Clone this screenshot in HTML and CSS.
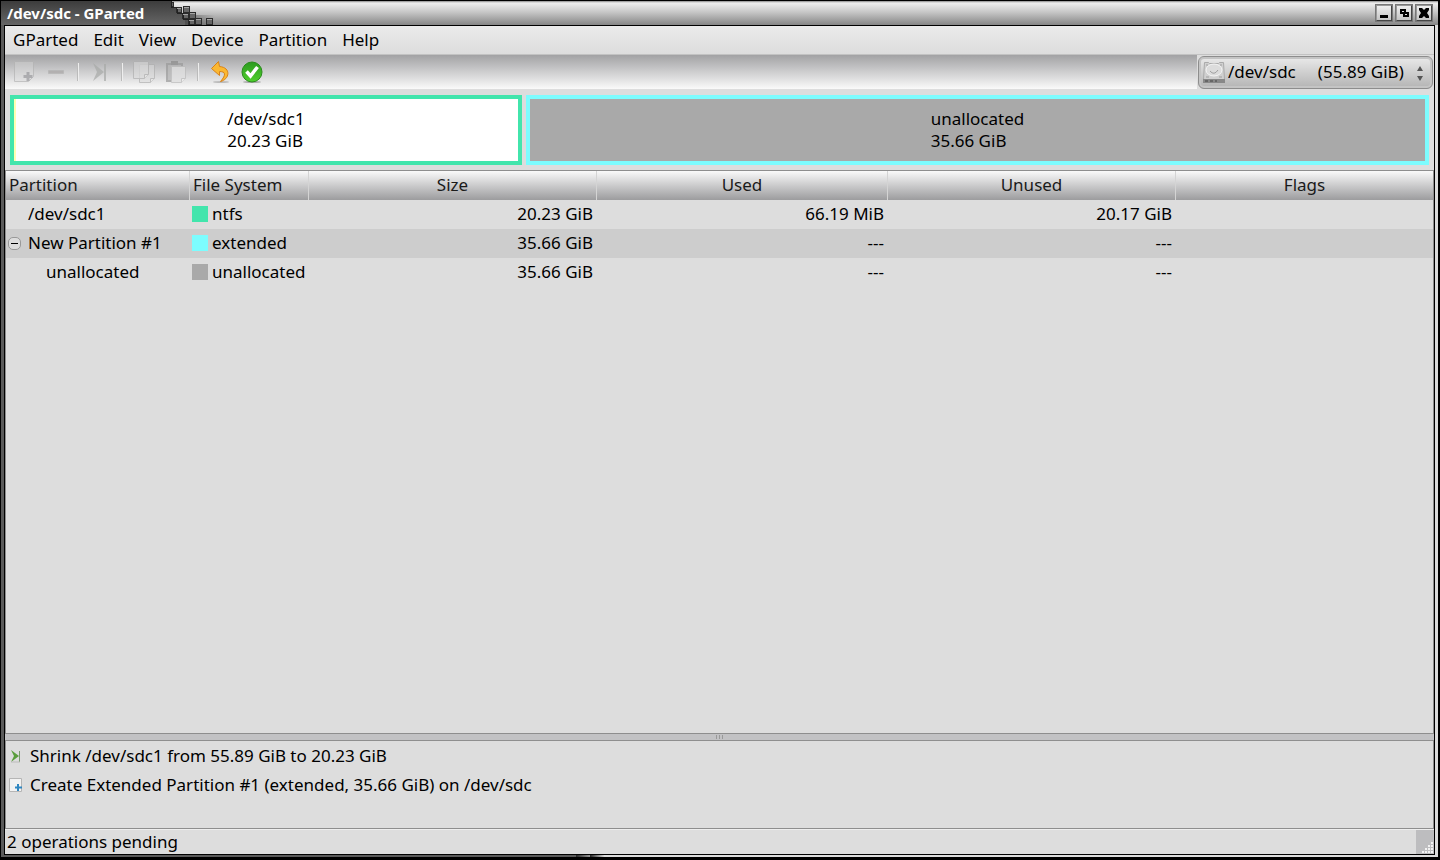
FILE: index.html
```
<!DOCTYPE html>
<html lang="en">
<head>
<meta charset="utf-8">
<title>/dev/sdc - GParted</title>
<link rel="stylesheet" href="styles.css">
</head>
<body>
<div class="window">
  <header class="titlebar">
    <h1 class="title">/dev/sdc - GParted</h1>
    <svg class="title-blocks" width="60" height="24" viewBox="0 0 60 24" shape-rendering="crispEdges" aria-hidden="true">
      <defs>
        <linearGradient id="dark" x1="0" y1="0" x2="0" y2="1"><stop offset="0" stop-color="#3c3c3c"/><stop offset="1" stop-color="#666"/></linearGradient>
        <linearGradient id="shade" x1="0" y1="0" x2="1" y2="0"><stop offset="0" stop-color="#444" stop-opacity=".6"/><stop offset="1" stop-color="#444" stop-opacity="0"/></linearGradient>
      </defs>
      <path d="M0 0h16v6h6v6h6v6h6v6H0z" fill="url(#dark)"/>
      <path d="M30 14h30v10H30z" fill="url(#shade)"/>
      <g fill="#666" stroke="#2c2c2c">
        <path d="M16.500 1.500h2v4h-2zM21.500 6.500h5v5h-5zM28.500 5.500h6v6h-6zM27.500 12.500h6v5h-6zM34.500 11.500h6v6h-6zM33.500 18.500h6v5h-6zM40.500 17.500h6v6h-6zM51.500 17.500h6v6h-6z"/>
      </g>
      <path d="M16 0v6h6v6h6v6h6v6" fill="none" stroke="#222"/>
      <path d="M22 7h4M29 6h5M28 13h5M35 12h5M34 19h5M41 18h5M52 18h5" transform="translate(0 .5)" stroke="#a4a4a4"/>
    </svg>
    <div class="window-buttons">
      <button class="wbtn" type="button" aria-label="Minimize"><svg width="12" height="12" viewBox="0 0 12 12"><path d="M2 8h8v3H2z"/></svg></button>
      <button class="wbtn" type="button" aria-label="Maximize"><svg width="12" height="12" viewBox="0 0 12 12"><path d="M2 2h6v5H2zM5 5h6v5H5z"/><path d="M4 4h2v1H4zM7 7h2v1H7z" fill="#ddd"/></svg></button>
      <button class="wbtn" type="button" aria-label="Close"><svg width="12" height="12" viewBox="0 0 12 12"><path d="M1 1h3l2 2 2-2h3v2L9 6l2 3v2H8L6 9l-2 2H1V9l2-3-2-3z"/></svg></button>
    </div>
  </header>

  <main class="content">
    <nav class="menubar" aria-label="Main menu">
      <button type="button">GParted</button>
      <button type="button">Edit</button>
      <button type="button">View</button>
      <button type="button">Device</button>
      <button type="button">Partition</button>
      <button type="button">Help</button>
    </nav>

    <div class="toolbar">
      <div class="tools">
        <button type="button" class="tool" aria-label="New" disabled><svg width="24" height="24" viewBox="0 0 24 24"><path d="M2.500 1.500h19v15l-5 5h-14z" fill="#ddd" fill-opacity=".5" stroke="#b4b4b4"/><path d="M16 12v9M11.500 16.500h9" stroke="#9a9a9e" stroke-width="3"/></svg></button>
        <button type="button" class="tool" aria-label="Delete" disabled><svg width="24" height="24" viewBox="0 0 24 24"><path d="M4.500 10.500h15v3h-15z" fill="#a8a4a4" stroke="#b0b0b0"/></svg></button>
        <span class="sep"></span>
        <button type="button" class="tool" aria-label="Resize/Move" disabled><svg width="24" height="24" viewBox="0 0 24 24"><path d="M5 3l11 9-11 9 4-9zM16 4h2v17h-2z" fill="#a8aaa8"/></svg></button>
        <span class="sep"></span>
        <button type="button" class="tool" aria-label="Copy" disabled><svg width="24" height="24" viewBox="0 0 24 24"><g fill="#ddd" fill-opacity=".7" stroke="#b0b0b0"><path d="M7.500 4.500h15v14l-4 4h-11z"/><path d="M1.500 1.500h15v13l-4 4h-11z"/><path d="M12.500 18.500v-4h4M18.500 22.500v-4h4" fill="#eee"/></g></svg></button>
        <button type="button" class="tool" aria-label="Paste" disabled><svg width="24" height="24" viewBox="0 0 24 24"><path d="M2 3h17v19H2z" fill="#999"/><path d="M4 5h13v15H4z" fill="#b4b4b4"/><path d="M7 1h7v4H7z" fill="#8c8c8c"/><path d="M7.500 6.500h14v12l-4 4h-10z" fill="#e0e0e0" stroke="#bbb"/><path d="M17.500 22.500v-4h4" fill="#eee" stroke="#bbb"/></svg></button>
        <span class="sep"></span>
        <button type="button" class="tool" aria-label="Undo"><svg width="24" height="24" viewBox="0 0 24 24"><ellipse cx="13" cy="22" rx="8" ry="1" fill="#bbb"/><path d="M10.500 1.500l-7 7 8 7v-4c6 0 7 3 1 10 9-2 11-14-1-15z" fill="#fbb832" stroke="#d98318"/></svg></button>
        <button type="button" class="tool" aria-label="Apply"><svg width="24" height="24" viewBox="0 0 24 24"><defs><linearGradient id="ok" x2="0" y2="1"><stop stop-color="#2c9a20"/><stop offset="1" stop-color="#4fd02c"/></linearGradient></defs><ellipse cx="12" cy="22" rx="9" ry="1" fill="#aaa"/><circle cx="12" cy="12" r="10" fill="url(#ok)" stroke="#2a8c1c"/><path d="M6.500 11.500l4 4.500 7-9" fill="none" stroke="#fff" stroke-width="3.500"/></svg></button>
      </div>
      <div class="device">
        <svg class="disk" width="24" height="24" viewBox="0 0 24 24" aria-hidden="true"><path d="M2.500 1.500h4l1 1h9l1-1h4l1 17h-21z" fill="#d0d0d0" stroke="#aaa"/><ellipse cx="12" cy="9" rx="8" ry="6" fill="#dcdcdc" stroke="#f4f4f4"/><path d="M8 10q4 5 8-1M4 4h2M18 4h2M4 16h3M17 16h3" fill="none" stroke="#a0a0a0"/><path d="M1 18h22v4H1z" fill="#888"/><path d="M3 20h3M8 20h3M13 20h2" stroke="#444"/></svg>
        <select aria-label="Device"><option>/dev/sdc&nbsp;&nbsp;&nbsp;&nbsp;&nbsp;(55.89 GiB)</option></select>
        <svg class="arrows" width="8" height="18" viewBox="0 0 8 18" aria-hidden="true"><path d="M1 7l3-5 3 5zM1 12l3 5 3-5z" fill="#555"/></svg>
      </div>
    </div>

    <section class="disk-map" aria-label="Disk layout">
      <div class="part part-ntfs"><p>/dev/sdc1<br>20.23 GiB</p></div>
      <div class="part part-free"><p>unallocated<br>35.66 GiB</p></div>
    </section>

    <section class="partitions">
      <table>
        <colgroup><col class="c-part"><col class="c-fs"><col class="c-size"><col class="c-used"><col class="c-size"><col></colgroup>
        <thead><tr><th>Partition</th><th>File System</th><th>Size</th><th>Used</th><th>Unused</th><th>Flags</th></tr></thead>
        <tbody>
          <tr><td class="name">/dev/sdc1</td><td class="fs"><i class="swatch ntfs"></i>ntfs</td><td>20.23 GiB</td><td>66.19 MiB</td><td>20.17 GiB</td><td></td></tr>
          <tr><td class="name parent"><button type="button" class="expander" aria-label="Collapse"></button>New Partition #1</td><td class="fs"><i class="swatch extended"></i>extended</td><td>35.66 GiB</td><td>---</td><td>---</td><td></td></tr>
          <tr><td class="name child">unallocated</td><td class="fs"><i class="swatch free"></i>unallocated</td><td>35.66 GiB</td><td>---</td><td>---</td><td></td></tr>
        </tbody>
      </table>
    </section>

    <div class="splitter"><i></i><i></i><i></i></div>

    <ul class="operations">
      <li><svg width="14" height="14" viewBox="0 0 14 14" aria-hidden="true"><path d="M2 1l8 6-8 6 3-6z" fill="#5a9e3c"/><path d="M10 2h1v11h-1z" fill="#769a6a"/><path d="M2 13h9" stroke="#bbb"/></svg>Shrink /dev/sdc1 from 55.89 GiB to 20.23 GiB</li>
      <li><svg width="14" height="14" viewBox="0 0 14 14" aria-hidden="true"><path d="M.5.500h12v13H.5z" fill="#f2f2f2" stroke="#b5b5b5"/><path d="M9 6v7M6 9.500h7" stroke="#2f86c0" stroke-width="2"/></svg>Create Extended Partition #1 (extended, 35.66 GiB) on /dev/sdc</li>
    </ul>

    <footer class="statusbar">
      <p>2 operations pending</p>
      <div class="grip"><svg width="12" height="12" viewBox="0 0 12 12" shape-rendering="crispEdges" aria-hidden="true"><path d="M9 0h2v2H9zM6 3h2v2H6zM9 3h2v2H9zM3 6h2v2H3zM6 6h2v2H6zM9 6h2v2H9zM0 9h2v2H0zM3 9h2v2H3zM6 9h2v2H6zM9 9h2v2H9z" fill="#f2f2f2"/></svg></div>
    </footer>
  </main>
</div>
</body>
</html>
```
FILE: styles.css
```
* { box-sizing: border-box; }

body {
  margin: 0;
  background: #000;
  color: #000;
  font: 17px/22px "Noto Sans", sans-serif;
}

button, select { font: inherit; color: inherit; margin: 0; }
p, h1, ul { margin: 0; padding: 0; }
svg { display: block; flex: none; }

/* Window frame */
.window {
  display: flex;
  flex-direction: column;
  height: 100vh;
  padding: 0 3px 2px;
  border: solid #000;
  border-width: 1px 2px 3px 1px;
  background: linear-gradient(to right, #5a5a5a 40%, #222 40%, #999 41%, #222 41%, #dcdcdc 42%);
}

.titlebar {
  display: flex;
  height: 24px;
  margin: 0 -3px;
  background: linear-gradient(#888, #eee 8%, #c8c8c8 45%, #868686);
}

.title {
  padding: 0 11px 0 6px;
  background: linear-gradient(#3c3c3c, #666);
  color: #fff;
  font-size: 15px;
  line-height: 24px;
}

.window-buttons {
  display: flex;
  gap: 2px;
  margin-left: auto;
  padding: 3px 5px 0 0;
}

.wbtn {
  display: grid;
  place-items: center;
  width: 18px;
  height: 18px;
  padding: 0;
  border: 2px outset #999;
  outline: 1px solid #777;
  outline-offset: -1px;
  background: linear-gradient(#eee, #c4c4c4);
}

.content {
  display: flex;
  flex: 1;
  flex-direction: column;
  min-height: 0;
  border: 1px solid #000;
  background: #ddd;
}

/* Menu */
.menubar {
  display: flex;
  gap: 1px;
  height: 29px;
  padding: 0 1px;
  border-bottom: 1px solid #c2c2c2;
  background: linear-gradient(#ebebeb, #ddd);
}

.menubar button {
  padding: 0 7px;
  border: 0;
  background: none;
}

/* Toolbar */
.toolbar { display: flex; height: 34px; }

.tools {
  display: flex;
  flex: 1;
  align-items: center;
  padding-left: 3px;
  background: linear-gradient(#a2a2a4, #fafafa);
}

.tool {
  display: grid;
  place-items: center;
  width: 32px;
  height: 32px;
  padding: 0;
  border: 0;
  background: none;
}

.tool:disabled { opacity: .7; }

.sep {
  width: 2px;
  height: 18px;
  margin: 0 5px;
  border-left: 1px solid #bbb;
  background: #eee;
}

.device {
  display: grid;
  align-items: center;
  width: 235px;
  margin: 1px 1px 0;
}

.device > * { grid-area: 1 / 1; }
.disk, .arrows { z-index: 1; pointer-events: none; }
.disk { margin-left: 4px; }
.arrows { justify-self: end; margin-right: 9px; }

.device select {
  width: 100%;
  height: 33px;
  padding: 0 20px 1px 29px;
  border: 1px solid #8d8d8d;
  border-radius: 6px;
  appearance: none;
  background: linear-gradient(#eaeaea, #b4b4b4);
  box-shadow: inset 0 0 0 2px #c4c4c4;
}

/* Disk map */
.disk-map {
  display: flex;
  gap: 4px;
  height: 81px;
  padding: 6px 5px 5px;
}

.part {
  display: grid;
  place-items: center;
  border: 4px solid;
}

.part-ntfs {
  flex: 504;
  border-color: #42e5ac;
  background: linear-gradient(to right, #ffffb4 2px, #fff 2px);
}

.part-free {
  flex: 895;
  border-color: #7dfcfe;
  background: #a9a9a9;
}

/* Partition table */
.partitions {
  flex: 1;
  min-height: 0;
  border: 1px solid #8e8e8e;
}

table {
  width: 100%;
  border-collapse: separate;
  border-spacing: 0;
  table-layout: fixed;
}

.c-part { width: 184px; }
.c-fs { width: 119px; }
.c-size { width: 288px; }
.c-used { width: 291px; }

th, td {
  height: 29px;
  padding: 0 4px;
  white-space: nowrap;
  line-height: 27px;
  vertical-align: top;
}

td { text-align: right; }

th {
  border-right: 1px solid #d4d4d4;
  background: linear-gradient(#fafafa, #9c9c9e);
  color: #1a1a1a;
  font-weight: 400;
}

th:nth-child(-n+2) { padding: 0 3px; text-align: left; }
th:last-child { border-right: 0; }
tbody tr:nth-child(even) { background: #cdcdcd; }
.name { padding-left: 22px; text-align: left; }
.name.parent { padding-left: 2px; }
.name.child { padding-left: 40px; }
.fs { padding-left: 2px; text-align: left; }

.swatch {
  display: inline-block;
  width: 16px;
  height: 16px;
  margin-right: 4px;
  vertical-align: -2px;
}

.ntfs { background: #42e5ac; }
.extended { background: #7dfcfe; }
.free { background: #a9a9a9; }

.expander {
  display: inline-block;
  width: 13px;
  height: 13px;
  margin-right: 7px;
  padding: 0;
  border: 1px solid #999;
  border-radius: 5px;
  background: linear-gradient(#000, #000) center / 7px 1px no-repeat, #ddd;
  vertical-align: 0;
}

/* Pending operations */
.splitter {
  display: flex;
  align-items: center;
  justify-content: center;
  gap: 2px;
  height: 6px;
  background: #c2c2c4;
}

.splitter i { width: 1px; height: 4px; background: #999; }

.operations {
  height: 89px;
  border: 1px solid #8e8e8e;
  list-style: none;
}

.operations li {
  display: flex;
  gap: 7px;
  align-items: center;
  height: 29px;
  padding-left: 3px;
}

.statusbar {
  display: flex;
  justify-content: space-between;
  height: 25px;
  border-top: 1px solid #eee;
}

.statusbar p { padding-left: 2px; line-height: 23px; }

.grip {
  display: flex;
  align-items: flex-end;
  justify-content: flex-end;
  width: 18px;
  background: #bdbdbf;
}
```
